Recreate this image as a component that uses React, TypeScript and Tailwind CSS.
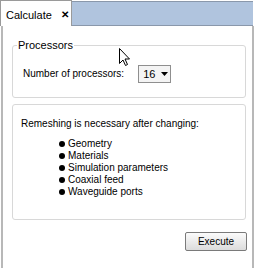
export default function App() {
  const items = ["Geometry", "Materials", "Simulation parameters", "Coaxial feed", "Waveguide ports"];
  return (
    <div className="relative w-[255px] h-[268px] bg-white text-[10px] leading-[12px] text-black" style={{ fontFamily: "'Liberation Sans', Arial, sans-serif" }}>
      {/* tab strip */}
      <div className="flex h-[26px]">
        <div className="w-[72px] h-[26px] bg-white border-t border-r border-l border-[#9a9a9a] flex items-center pl-[5px] pt-[2px] whitespace-nowrap text-[11px]">
          <span>Calculate</span>
          <span className="ml-[9px] font-bold text-[10px]">✕</span>
        </div>
        <div className="flex-1 mt-[1px] mr-[2px] h-[25px] bg-[#b0c4de] border-t border-b border-[#8a98ab]" />
      </div>
      {/* panel */}
      <div className="h-[242px] border-l-[2px] border-r-[2px] border-[#b8b8b8] ml-[1px] mr-[1px] pl-[9px] pr-[6px] pt-[19px]">
        <div className="relative border border-[#d8d8d8] rounded-[3px] h-[53px] pl-[10px] pt-[19px]">
          <span className="absolute left-[4px] top-[-7px] bg-white px-[1px] text-[11px]">Processors</span>
          <div className="flex items-center">
            <span>Number of processors:</span>
            <div className="ml-[14px] w-[33px] h-[18px] border border-[#8f8f8f] bg-[#f4f4f4] flex items-center pl-[4px] text-[11px]">
              <span>16</span>
              <svg className="ml-[6px]" width="7" height="4" viewBox="0 0 7 4"><path d="M0 0h7L3.5 4z" fill="#000" /></svg>
            </div>
          </div>
        </div>
        <div className="mt-[6px] border border-[#d8d8d8] rounded-[3px] h-[116px] pl-[8px] pt-[13px]">
          <div className="whitespace-nowrap">Remeshing is necessary after changing:</div>
          <div className="mt-[8px] pl-[38px] flex flex-col">
            {items.map((t) => (
              <div key={t} className="flex items-center h-[12px]">
                <span className="w-[6px] h-[6px] rounded-full bg-black mr-[3px]" />
                <span>{t}</span>
              </div>
            ))}
          </div>
        </div>
        <div className="flex justify-end mt-[12px] -mr-[1px]">
          <button className="w-[62px] h-[19px] border border-[#7a7a7a] rounded-[2px] bg-gradient-to-b from-[#fbfbfb] to-[#dcdcdc] flex items-center justify-center">
            Execute
          </button>
        </div>
      </div>
      {/* mouse cursor */}
      <svg className="absolute left-[119px] top-[48px]" width="12" height="19" viewBox="0 0 12 19">
        <path d="M0.5 0.5V15.5L4 12L6.5 17.5L8.5 16.5L6 11H10.5Z" fill="#fff" stroke="#000" strokeWidth="1" />
      </svg>
    </div>
  );
}
